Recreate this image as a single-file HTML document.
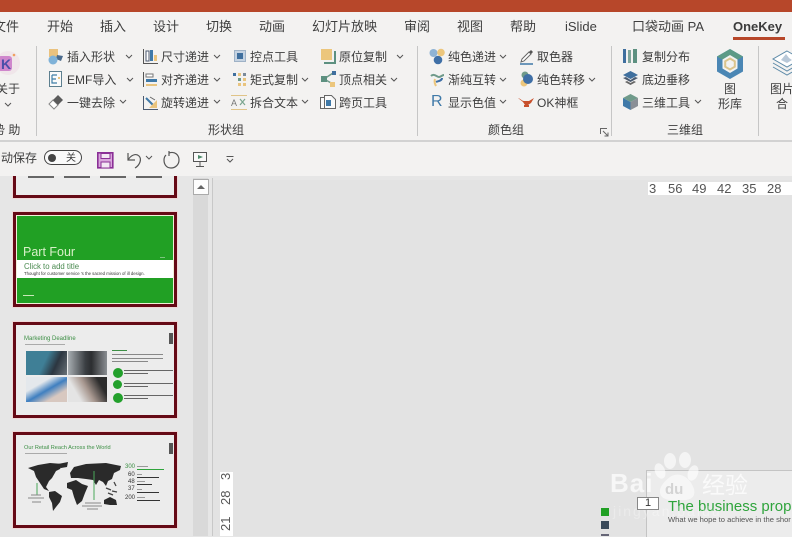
<!DOCTYPE html>
<html lang="zh"><head><meta charset="utf-8">
<style>
html,body{margin:0;padding:0}
body{width:792px;height:536px;overflow:hidden;position:relative;background:#e6e6e6;font-family:"Liberation Sans","Noto Sans CJK SC",sans-serif;color:#3e3e3e}
.a{position:absolute}
.t{position:absolute;white-space:nowrap;line-height:16px;font-size:12px;color:#3e3e3e}
.tab{position:absolute;top:18px;white-space:nowrap;line-height:17px;font-size:13px;color:#3e3e3e}
.c{position:absolute;width:6px;height:4px}
.sep{position:absolute;top:46px;width:1px;height:90px;background:#c6c6c6}
svg{position:absolute;overflow:visible}
.sl{position:absolute;left:13px;width:158px;border:3px solid #660a16;outline:1px solid #f0d8d8;background:#ececec;overflow:hidden}
.r{position:absolute;top:181px;font-size:13px;line-height:15px;color:#555;white-space:nowrap}
.v{position:absolute;left:218px;font-size:13px;line-height:16px;color:#555;white-space:nowrap;transform-origin:0 0;transform:rotate(-90deg)}
</style></head><body>

<!-- slide panel (painted first so the toolbar overlaps it) -->
<div class="a" style="left:193px;top:178px;width:15px;height:358px;background:#d9d9d9"></div>
<div class="a" style="left:193px;top:179px;width:14px;height:14px;background:#fdfdfd;border:1px solid #ababab"></div>
<svg style="left:197px;top:184px" width="8" height="5"><path d="M0 5l4-4 4 4z" fill="#666"/></svg>
<div class="a" style="left:212px;top:178px;width:1px;height:358px;background:#c8c8c8"></div>
<div class="a" style="left:213px;top:180px;width:579px;height:356px;background:#e3e3e3"></div>

<!-- slide 1 (cut) -->
<div class="sl" style="top:160px;height:32px">
 <div class="a" style="left:12px;top:13px;width:26px;height:2px;background:#666"></div>
 <div class="a" style="left:48px;top:13px;width:26px;height:2px;background:#666"></div>
 <div class="a" style="left:84px;top:13px;width:26px;height:2px;background:#666"></div>
 <div class="a" style="left:120px;top:13px;width:26px;height:2px;background:#666"></div>
</div>

<!-- slide 2 -->
<div class="sl" style="top:212px;height:89px;background:#f0f0d8">
 <div class="a" style="left:1px;top:1px;width:156px;height:87px;background:#21a024"></div>
 <div class="a" style="left:1px;top:45px;width:156px;height:18px;background:#fff"></div>
 <span class="t" style="left:7px;top:29px;font-size:12.5px;color:#d8f0c8;line-height:16px">Part Four</span>
 <span class="t" style="left:8px;top:46px;font-size:7.8px;line-height:11px;color:#4a8a50">Click to add title</span>
 <span class="t" style="left:8px;top:55px;font-size:4.3px;line-height:7px;color:#333">Thought for customer service 's the sacred mission of ill design.</span>
 <div class="a" style="left:7px;top:80px;width:11px;height:1px;background:#c8e8b8"></div>
 <div class="a" style="left:144px;top:42px;width:5px;height:1px;background:#7cc47e"></div>
</div>

<!-- slide 3 -->
<div class="sl" style="top:322px;height:90px">
 <span class="t" style="left:8px;top:9px;font-size:6px;line-height:10px;color:#3d8f45">Marketing Deadline</span>
 <div class="a" style="left:9px;top:19px;width:40px;height:1px;background:#aaa"></div>
 <div class="a" style="left:153px;top:8px;width:4px;height:11px;background:#555"></div>
 <div class="a" style="left:10px;top:26px;width:41px;height:24px;background:linear-gradient(115deg,#3f7f96 45%,#2c3640 70%,#6a7278)"></div>
 <div class="a" style="left:52px;top:26px;width:39px;height:24px;background:linear-gradient(90deg,#a8aeb2,#3a3e42 45%,#2c2e30 60%,#8a8e92)"></div>
 <div class="a" style="left:10px;top:52px;width:41px;height:25px;background:linear-gradient(150deg,#e4e8ec 30%,#3f7fc0 52%,#d8c8c0 75%)"></div>
 <div class="a" style="left:52px;top:52px;width:39px;height:25px;background:linear-gradient(60deg,#e4e4e4 25%,#a89890 50%,#2c2c2c 80%)"></div>
 <div class="a" style="left:96px;top:25px;width:15px;height:1px;background:#3d8f45"></div>
 <div class="a" style="left:96px;top:29px;width:51px;height:1px;background:#888"></div>
 <div class="a" style="left:96px;top:33px;width:51px;height:1px;background:#888"></div>
 <div class="a" style="left:96px;top:36px;width:36px;height:1px;background:#888"></div>
 <div class="a" style="left:97px;top:43px;width:10px;height:10px;border-radius:50%;background:#23a02c"></div>
 <div class="a" style="left:97px;top:55px;width:9px;height:9px;border-radius:50%;background:#23a02c"></div>
 <div class="a" style="left:97px;top:68px;width:10px;height:10px;border-radius:50%;background:#23a02c"></div>
 <div class="a" style="left:108px;top:45px;width:49px;height:1px;background:#666"></div><div class="a" style="left:108px;top:48px;width:24px;height:1px;background:#666"></div>
 <div class="a" style="left:108px;top:58px;width:49px;height:1px;background:#666"></div><div class="a" style="left:108px;top:61px;width:24px;height:1px;background:#666"></div>
 <div class="a" style="left:108px;top:70px;width:49px;height:1px;background:#666"></div><div class="a" style="left:108px;top:73px;width:24px;height:1px;background:#666"></div>
</div>

<!-- slide 4 -->
<div class="sl" style="top:432px;height:90px">
 <span class="t" style="left:8px;top:8px;font-size:5.6px;line-height:10px;color:#3d8f45">Our Retail Reach Across the World</span>
 <div class="a" style="left:9px;top:18px;width:42px;height:1px;background:#aaa"></div>
 <div class="a" style="left:153px;top:8px;width:4px;height:11px;background:#555"></div>
 <svg style="left:0;top:0" width="158" height="90" viewBox="0 0 158 90">
  <g fill="#2a2a2a">
  <path d="M12 33L22 30 34 28 47 29 44 34 40 36 36 43 33 46 30 52 33 56 28 54 24 48 20 42 18 36Z"/>
  <path d="M42 29L52 27 51 32 45 33Z"/>
  <path d="M33 57L39 56 46 61 44 67 40 72 37 76 36 68 33 62Z"/>
  <path d="M51 48L60 45 66 49 72 51 69 58 66 66 61 70 58 62 56 55 51 53Z"/>
  <path d="M54 38L58 32 70 29 90 28 105 31 104 35 98 38 96 44 92 46 90 51 87 47 83 45 80 50 77 45 70 44 62 43 55 43Z"/>
  <path d="M88 65L94 62 100 65 101 70 94 70 88 69Z"/>
  </g>
  <path d="M90 53l5 2M96 56l5 1M92 58l5 2M98 47l2 4" stroke="#444" stroke-width="1.3"/>
  <path d="M21 48v12M78 36v29" stroke="#4aa85a"/>
  <path d="M15 60h10M12 63h16M16 67h9M69 68h16M66 71h20M71 74h11" stroke="#888"/>
 </svg>
 <span class="t" style="left:109px;top:28px;font-size:6px;line-height:8px;color:#3d8f45">300</span>
 <span class="t" style="left:112px;top:36px;font-size:6px;line-height:8px;color:#333">60</span>
 <span class="t" style="left:112px;top:43px;font-size:6px;line-height:8px;color:#333">48</span>
 <span class="t" style="left:112px;top:50px;font-size:6px;line-height:8px;color:#333">37</span>
 <span class="t" style="left:109px;top:59px;font-size:6px;line-height:8px;color:#333">200</span>
 <div class="a" style="left:121px;top:34px;width:27px;height:1px;background:#2fa43c"></div>
 <div class="a" style="left:121px;top:42px;width:22px;height:1px;background:#333"></div>
 <div class="a" style="left:121px;top:49px;width:15px;height:1px;background:#333"></div>
 <div class="a" style="left:121px;top:57px;width:22px;height:1px;background:#333"></div>
 <div class="a" style="left:121px;top:65px;width:23px;height:1px;background:#333"></div>
 <div class="a" style="left:121px;top:31px;width:11px;height:1px;background:#999"></div>
 <div class="a" style="left:121px;top:39px;width:5px;height:1px;background:#999"></div>
 <div class="a" style="left:121px;top:46px;width:8px;height:1px;background:#999"></div>
 <div class="a" style="left:121px;top:54px;width:5px;height:1px;background:#999"></div>
 <div class="a" style="left:121px;top:62px;width:8px;height:1px;background:#999"></div>
</div>

<!-- rulers -->
<div class="a" style="left:648px;top:182px;width:144px;height:13px;background:#fff"></div>
<span class="r" style="left:649px">3</span>
<span class="r" style="left:668px">56</span>
<span class="r" style="left:692px">49</span>
<span class="r" style="left:717px">42</span>
<span class="r" style="left:742px">35</span>
<span class="r" style="left:767px">28</span>
<div class="a" style="left:220px;top:472px;width:13px;height:64px;background:#fff"></div>
<span class="v" style="top:480px">3</span>
<span class="v" style="top:505px">28</span>
<span class="v" style="top:531px">21</span>

<!-- main slide corner -->
<div class="a" style="left:646px;top:470px;width:146px;height:66px;background:#ececec;border:1px solid #c4c4c4;border-right:0;border-bottom:0"></div>
<span class="t" style="left:668px;top:497px;font-size:15px;line-height:20px;color:#2fa43c">The business prop</span>
<span class="t" style="left:668px;top:514px;font-size:7.6px;line-height:12px;color:#555">What we hope to achieve in the shor</span>
<div class="a" style="left:601px;top:508px;width:8px;height:8px;background:#21a024"></div>
<div class="a" style="left:601px;top:521px;width:8px;height:8px;background:#3a4a5a"></div>
<div class="a" style="left:601px;top:534px;width:8px;height:2px;background:#667"></div>

<!-- watermark -->
<svg style="left:608px;top:450px" width="184" height="70" viewBox="0 0 184 70">
 <g fill="#fff" fill-opacity=".62"><ellipse cx="62" cy="11" rx="6" ry="8"/><ellipse cx="77" cy="10" rx="6" ry="8"/><ellipse cx="85" cy="23" rx="5" ry="8" transform="rotate(20 85 23)"/><ellipse cx="52" cy="21" rx="5" ry="8" transform="rotate(-20 52 21)"/></g>
 <path d="M62 27c9-6 20 0 24 12 2 9-4 12-16 11-12 1-19-2-18-10 1-5 5-9 10-13z" fill="#fff" fill-opacity=".55"/>
 <text x="2" y="42" font-family="Liberation Sans" font-size="26" font-weight="bold" letter-spacing="1" fill="#fff" fill-opacity=".72">Bai</text>
 <text x="57" y="44" font-family="Liberation Sans" font-size="15" font-weight="bold" fill="#cfcfcf" fill-opacity=".9">du</text>
 <text x="94" y="43" font-family="Noto Sans CJK SC,sans-serif" font-size="23" fill="#fff" fill-opacity=".72">经验</text>
 <text x="5" y="66" font-family="Liberation Sans" font-size="14" letter-spacing="2" fill="#fff" fill-opacity=".3">jingyan.baidu</text>
</svg>
<div class="a" style="left:637px;top:497px;width:20px;height:11px;background:#fff;border:1px solid #888;font-size:11px;line-height:11px;text-align:center;color:#333">1</div>

<!-- title bar -->
<div class="a" style="left:0;top:0;width:792px;height:12px;background:#b7472a"></div>
<div class="a" style="left:0;top:12px;width:792px;height:128px;background:#f3f2f1"></div>
<div class="a" style="left:0;top:140px;width:792px;height:2px;background:#d2d2d2"></div>
<div class="a" style="left:0;top:142px;width:792px;height:34px;background:#f3f2f1"></div>

<!-- tabs -->
<span class="tab" style="left:-7px">文件</span>
<span class="tab" style="left:47px">开始</span>
<span class="tab" style="left:100px">插入</span>
<span class="tab" style="left:153px">设计</span>
<span class="tab" style="left:206px">切换</span>
<span class="tab" style="left:259px">动画</span>
<span class="tab" style="left:312px">幻灯片放映</span>
<span class="tab" style="left:404px">审阅</span>
<span class="tab" style="left:457px">视图</span>
<span class="tab" style="left:510px">帮助</span>
<span class="tab" style="left:565px">iSlide</span>
<span class="tab" style="left:632px">口袋动画 PA</span>
<span class="tab" style="left:733px;font-weight:bold;color:#3c3c3c">OneKey</span>
<div class="a" style="left:733px;top:37px;width:52px;height:3px;background:#b7472a"></div>

<!-- separators -->
<div class="sep" style="left:36px"></div>
<div class="sep" style="left:417px"></div>
<div class="sep" style="left:611px"></div>
<div class="sep" style="left:758px"></div>

<!-- about -->
<svg style="left:0;top:50px" width="22" height="26" viewBox="0 0 22 26"><circle cx="8" cy="13" r="12" fill="#f0e6ea"/><rect x="-2" y="6" width="14" height="15" rx="3" fill="#cf86cc"/><text x="1" y="19" font-size="14" font-weight="bold" font-family="Liberation Sans" fill="#4a4fa8">K</text><circle cx="14" cy="5" r="1.3" fill="#f0a060"/></svg>
<span class="t" style="left:-4px;top:81px">关于</span>
<svg style="left:4px;top:102px" width="8" height="5"><path d="M1 1l3 3 3-3" fill="none" stroke="#555"/></svg>
<span class="t" style="left:-7px;top:122px">势 助</span>

<!-- col1 -->
<svg style="left:48px;top:48px" width="16" height="18"><rect x="1" y="1" width="9" height="8" fill="#eac27e"/><path d="M9 7l6 1-2 5-5-2z" fill="#4a6a8c"/><circle cx="5" cy="12" r="4.5" fill="#7fb2d8"/></svg>
<span class="t" style="left:67px;top:49px">插入形状</span>
<svg class="c" style="left:126px;top:55px"><path d="M0 0l3 3 3-3" fill="none" stroke="#555"/></svg>
<svg style="left:49px;top:71px" width="14" height="17"><rect x=".5" y=".5" width="12" height="15" fill="#fafafa" stroke="#5d7f8f"/><path d="M3 4h5M3 4v8h5M3 8h4" fill="none" stroke="#3f7ea6" stroke-width="1.2"/><rect x="9" y="6" width="2" height="2" fill="#e9c47e"/></svg>
<span class="t" style="left:67px;top:72px">EMF导入</span>
<svg class="c" style="left:127px;top:78px"><path d="M0 0l3 3 3-3" fill="none" stroke="#555"/></svg>
<svg style="left:48px;top:94px" width="16" height="16"><path d="M1 10l5 5 4-4-5-5z" fill="#fff" stroke="#888"/><path d="M5 6l5-5 5 5-5 5z" fill="#5b5b5b"/></svg>
<span class="t" style="left:67px;top:95px">一键去除</span>
<svg class="c" style="left:120px;top:100px"><path d="M0 0l3 3 3-3" fill="none" stroke="#555"/></svg>

<!-- col2 -->
<svg style="left:143px;top:49px" width="15" height="15"><path d="M.5 0v14.500H15" fill="none" stroke="#555"/><rect x="3" y="2" width="3" height="10" fill="#fff" stroke="#4c5a70"/><rect x="7" y="1" width="3" height="11" fill="#3f79a8"/><rect x="11" y="6" width="3" height="6" fill="#e9c47e"/></svg>
<span class="t" style="left:161px;top:49px">尺寸递进</span>
<svg class="c" style="left:214px;top:55px"><path d="M0 0l3 3 3-3" fill="none" stroke="#555"/></svg>
<svg style="left:143px;top:72px" width="15" height="15"><path d="M.5 0v15" stroke="#555"/><rect x="3" y="2" width="7" height="3" fill="#fff" stroke="#777"/><rect x="3" y="7" width="11" height="3" fill="#3f79a8"/><rect x="3" y="12" width="11" height="2" fill="#e9c47e"/></svg>
<span class="t" style="left:161px;top:72px">对齐递进</span>
<svg class="c" style="left:214px;top:78px"><path d="M0 0l3 3 3-3" fill="none" stroke="#555"/></svg>
<svg style="left:143px;top:95px" width="15" height="15"><path d="M.5 1v13.500H15" fill="none" stroke="#4a5a70"/><path d="M3 3l9 9" stroke="#3f79a8" stroke-width="2"/><path d="M6 13l8-8v8z" fill="#e9c47e"/><path d="M7 2l5 3" stroke="#666" fill="none"/></svg>
<span class="t" style="left:161px;top:95px">旋转递进</span>
<svg class="c" style="left:214px;top:100px"><path d="M0 0l3 3 3-3" fill="none" stroke="#555"/></svg>

<!-- col3 -->
<svg style="left:234px;top:50px" width="13" height="13"><rect x=".5" y=".5" width="11" height="11" fill="#c5d3e2" stroke="#9fb2c6"/><rect x="3" y="3" width="6" height="6" fill="#3f6f9e"/></svg>
<span class="t" style="left:250px;top:49px">控点工具</span>
<svg style="left:232px;top:72px" width="15" height="15"><g fill="#e9c47e"><rect x="1" y="1" width="3" height="3" fill="#3f6f9e"/><rect x="6" y="1" width="3" height="3"/><rect x="11" y="1" width="3" height="3" fill="#7a8a9a"/><rect x="11" y="6" width="3" height="3"/><rect x="6" y="6" width="3" height="3" fill="#6f9a8a"/><rect x="11" y="11" width="3" height="3"/><rect x="6" y="11" width="3" height="3"/></g></svg>
<span class="t" style="left:250px;top:72px">矩式复制</span>
<svg class="c" style="left:302px;top:78px"><path d="M0 0l3 3 3-3" fill="none" stroke="#555"/></svg>
<svg style="left:231px;top:95px" width="16" height="15"><path d="M0 .5h16M0 14.500h16" stroke="#e0c488"/><text x="0" y="11" font-size="9" font-family="Liberation Sans" fill="#777">A</text><path d="M9 4l5 6M14 4l-5 6" stroke="#7aa58e" stroke-width="1.2"/></svg>
<span class="t" style="left:250px;top:95px">拆合文本</span>
<svg class="c" style="left:302px;top:100px"><path d="M0 0l3 3 3-3" fill="none" stroke="#555"/></svg>

<!-- col4 -->
<svg style="left:321px;top:49px" width="15" height="15"><rect x="0" y="0" width="11" height="11" fill="#ecc67c"/><path d="M14 2v12H3" fill="none" stroke="#5d9080" stroke-width="2"/></svg>
<span class="t" style="left:339px;top:49px">原位复制</span>
<svg class="c" style="left:397px;top:55px"><path d="M0 0l3 3 3-3" fill="none" stroke="#555"/></svg>
<svg style="left:321px;top:71px" width="15" height="16"><path d="M3 8l9-6M3 8l9 5" stroke="#6f9a8a" stroke-width="1.500"/><rect x="0" y="5" width="6" height="6" fill="#5d9080"/><rect x="11" y="0" width="4" height="4" fill="#3f6f9e"/><rect x="9" y="11" width="5" height="5" fill="#ecc67c"/></svg>
<span class="t" style="left:339px;top:72px">顶点相关</span>
<svg class="c" style="left:391px;top:78px"><path d="M0 0l3 3 3-3" fill="none" stroke="#555"/></svg>
<svg style="left:320px;top:94px" width="16" height="16"><path d="M.5 3.500h4v11h-4zM4.500 1.500h7l4 4v9h-11z" fill="#fafafa" stroke="#666"/><rect x="6" y="6" width="5" height="6" fill="#3f79a8"/></svg>
<span class="t" style="left:339px;top:95px">跨页工具</span>

<span class="t" style="left:208px;top:122px">形状组</span>

<!-- colors col -->
<svg style="left:429px;top:48px" width="16" height="16"><circle cx="4.500" cy="5" r="4" fill="#8fb3d4"/><circle cx="12" cy="4.500" r="3.800" fill="#ecc67c"/><circle cx="9" cy="12" r="4.300" fill="#3f6fa6"/></svg>
<span class="t" style="left:448px;top:49px">纯色递进</span>
<svg class="c" style="left:500px;top:55px"><path d="M0 0l3 3 3-3" fill="none" stroke="#555"/></svg>
<svg style="left:430px;top:72px" width="15" height="15"><path d="M1 4c3-3 6 1 8 1s3-2 5-2" fill="none" stroke="#6f9a8a" stroke-width="2"/><path d="M12 6c0 3-4 3-6 4" fill="none" stroke="#3f6fa6" stroke-width="2"/><path d="M5 7c-1 3 0 5 1 7" fill="none" stroke="#ecc67c" stroke-width="2"/></svg>
<span class="t" style="left:448px;top:72px">渐纯互转</span>
<svg class="c" style="left:500px;top:78px"><path d="M0 0l3 3 3-3" fill="none" stroke="#555"/></svg>
<span class="t" style="left:431px;top:93px;font-size:16px;line-height:18px;color:#3f79a8">R</span>
<span class="t" style="left:448px;top:95px">显示色值</span>
<svg class="c" style="left:500px;top:100px"><path d="M0 0l3 3 3-3" fill="none" stroke="#555"/></svg>

<svg style="left:520px;top:49px" width="14" height="16"><path d="M2 10l7-7 2 2-7 7-3 1z" fill="#fff" stroke="#666"/><path d="M9 3l2-2 2 2-2 2" fill="#555"/><path d="M0 15h13" stroke="#3f79a8" stroke-width="1.500"/></svg>
<span class="t" style="left:537px;top:49px">取色器</span>
<svg style="left:519px;top:71px" width="15" height="16"><circle cx="6" cy="4" r="3.500" fill="#6f9a8a"/><circle cx="5" cy="12" r="3.500" fill="#ecc67c"/><circle cx="9" cy="8" r="5" fill="#3f6fa6"/></svg>
<span class="t" style="left:537px;top:72px">纯色转移</span>
<svg class="c" style="left:589px;top:78px"><path d="M0 0l3 3 3-3" fill="none" stroke="#555"/></svg>
<svg style="left:518px;top:97px" width="17" height="11"><path d="M0 1c3 1 4 3 6 3h5l5-3-3 5-3 2H7L5 5z" fill="#c8502c"/><rect x="6" y="8" width="5" height="2" fill="#c8502c"/></svg>
<span class="t" style="left:537px;top:95px">OK神框</span>
<span class="t" style="left:488px;top:122px">颜色组</span>
<svg style="left:600px;top:128px" width="9" height="9"><path d="M.5 6V.5H7" fill="none" stroke="#666"/><path d="M3 3l5 5M8 4.500V8H4.500" fill="none" stroke="#666"/></svg>

<!-- 3D col -->
<svg style="left:623px;top:49px" width="15" height="15"><rect x="0" y="0" width="3" height="14" fill="#3f6f9e"/><rect x="5" y="1" width="3" height="13" fill="#7fa59a"/><rect x="10" y="0" width="4" height="14" fill="#5d9080"/></svg>
<span class="t" style="left:642px;top:49px">复制分布</span>
<svg style="left:622px;top:71px" width="17" height="15"><path d="M8.500 0L16 4l-7.500 4L1 4z" fill="#3f6f9e"/><path d="M1 7l3-1 4.500 3L13 6l3 1-7.500 4z" fill="#4a5a70"/><path d="M3 11l2-1 3.500 2 3.500-2 2 1-5.500 3z" fill="#666"/></svg>
<span class="t" style="left:642px;top:72px">底边垂移</span>
<svg style="left:623px;top:94px" width="15" height="16"><path d="M7.500 0L15 4l-7.500 4L0 4z" fill="#6f9a8a"/><path d="M0 4l7.500 4v8L0 12z" fill="#3f79a8"/><path d="M15 4L7.500 8v8l7.500-4z" fill="#8a8f96"/></svg>
<span class="t" style="left:642px;top:95px">三维工具</span>
<svg class="c" style="left:695px;top:100px"><path d="M0 0l3 3 3-3" fill="none" stroke="#555"/></svg>
<span class="t" style="left:667px;top:122px">三维组</span>

<!-- gallery -->
<svg style="left:716px;top:49px" width="28" height="31" viewBox="0 0 28 31"><path d="M14 0L27 7.500v15L14 30 1 22.500v-15z" fill="#4a86b4"/><path d="M14 0L27 7.500 21 11 14 7 7 11 1 7.500z" fill="#5d9a86"/><path d="M14 6l7.500 4.500v9L14 24l-7.500-4.500v-9z" fill="#f3f2f1"/><path d="M14 9.500l4.800 2.800v5.400L14 20.500l-4.800-2.800v-5.400z" fill="none" stroke="#dcc48c" stroke-width="2"/></svg>
<span class="t" style="left:724px;top:81px">图</span>
<span class="t" style="left:718px;top:96px">形库</span>

<svg style="left:772px;top:50px" width="30" height="28" viewBox="0 0 30 28"><path d="M15 1l14 8-14 8L1 9z" fill="#fff" stroke="#5d8aa8"/><path d="M9 10l5-6 3 4 3 2-5 3z" fill="#b8c8d8"/><path d="M1 13l14 8 14-8M1 17l14 8 14-8" fill="none" stroke="#5d8aa8"/></svg>
<span class="t" style="left:770px;top:81px">图片</span>
<span class="t" style="left:776px;top:96px">合</span>

<!-- QAT -->
<span class="t" style="left:1px;top:150px">动保存</span>
<div class="a" style="left:44px;top:150px;width:36px;height:13px;border:1px solid #444;border-radius:8px;background:#fafafa"></div>
<div class="a" style="left:48px;top:154px;width:8px;height:8px;border-radius:50%;background:#444"></div>
<span class="t" style="left:66px;top:151px;font-size:10px">关</span>
<svg style="left:97px;top:152px" width="17" height="17"><rect x=".8" y=".8" width="15" height="15" fill="#d9a6dc" stroke="#8a2f96" stroke-width="1.600"/><rect x="4" y="1.500" width="9" height="5" fill="#f3e6f3" stroke="#8a2f96"/><rect x="4" y="10" width="9" height="6" fill="#f3e6f3" stroke="#8a2f96"/></svg>
<svg style="left:126px;top:151px" width="17" height="18"><path d="M2 9C5 4 10 2 13 5c3 3 1 9-4 12M2 2v7h7" fill="none" stroke="#555" stroke-width="1.200"/></svg>
<svg class="c" style="left:146px;top:156px"><path d="M0 0l3 3 3-3" fill="none" stroke="#555"/></svg>
<svg style="left:163px;top:150px" width="17" height="19"><path d="M6 3c6-2 10 2 10 7s-4 8-8 8-7-3-7-8c0-2 1-4 2-5M6 1v5" fill="none" stroke="#555" stroke-width="1.200"/></svg>
<svg style="left:193px;top:152px" width="15" height="16"><path d="M.5.5h13v9H.5zM7 10v4M3 14.500h8" fill="#f8f8f8" stroke="#555"/><path d="M5 3l5 2-5 2z" fill="#4d8a6a"/></svg>
<svg style="left:226px;top:156px" width="8" height="7"><path d="M.5.5h7M1 3l3 3 3-3" fill="none" stroke="#555"/></svg>
</body></html>
